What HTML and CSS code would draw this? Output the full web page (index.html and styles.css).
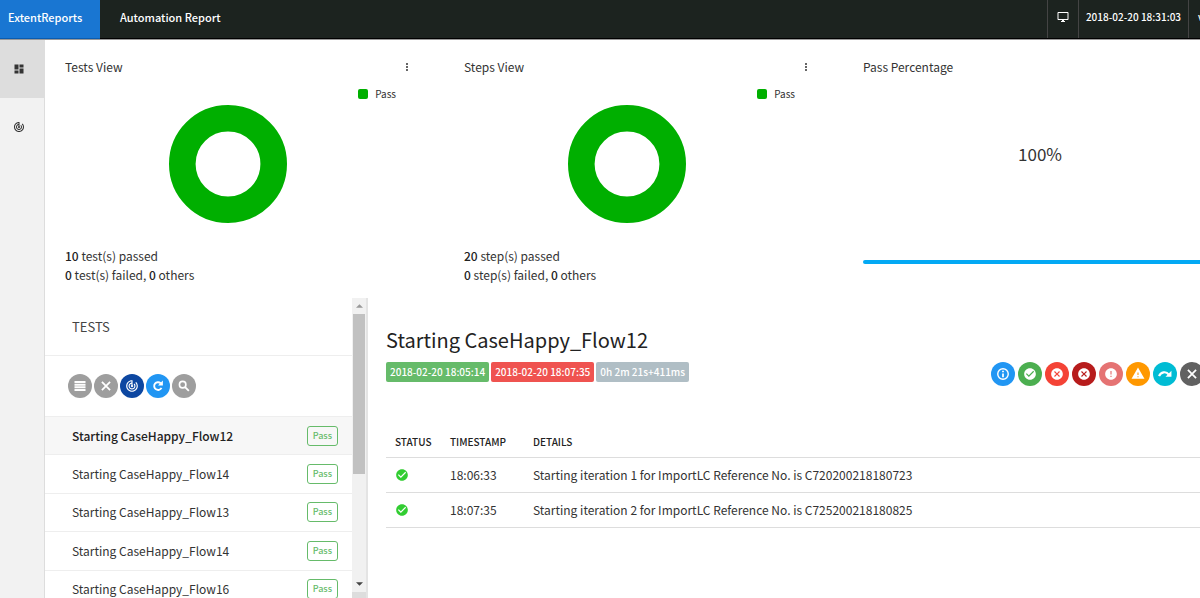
FILE: index.html
```html
<!DOCTYPE html>
<html lang="en">
<head>
<meta charset="utf-8">
<title>Automation Report</title>
<link rel="stylesheet" href="styles.css">
</head>
<body>
<svg class="sprite" aria-hidden="true">
  <symbol id="i-track" viewBox="0 0 24 24"><path fill="currentColor" d="M19.07 4.93l-1.41 1.41C19.1 7.79 20 9.79 20 12c0 4.42-3.58 8-8 8s-8-3.58-8-8c0-4.08 3.05-7.44 7-7.93v2.02C8.16 6.57 6 9.03 6 12c0 3.31 2.69 6 6 6s6-2.69 6-6c0-1.66-.67-3.16-1.76-4.24l-1.41 1.41C15.55 9.9 16 10.9 16 12c0 2.21-1.79 4-4 4s-4-1.79-4-4c0-1.86 1.28-3.41 3-3.86v2.14c-.6.35-1 .98-1 1.72 0 1.1.9 2 2 2s2-.9 2-2c0-.74-.4-1.38-1-1.72V2h-1C6.48 2 2 6.48 2 12s4.48 10 10 10 10-4.48 10-10c0-2.76-1.12-5.26-2.93-7.07z"/></symbol>
  <symbol id="i-close" viewBox="0 0 24 24"><path fill="none" stroke="currentColor" stroke-width="3" d="M5 5l14 14M19 5L5 19"/></symbol>
  <symbol id="i-more" viewBox="0 0 24 24"><path fill="currentColor" d="M12 8a2 2 0 100-4 2 2 0 000 4zm0 2a2 2 0 100 4 2 2 0 000-4zm0 6a2 2 0 100 4 2 2 0 000-4z"/></symbol>
  <symbol id="i-check" viewBox="0 0 24 24"><path fill="currentColor" d="M12 2C6.48 2 2 6.48 2 12s4.48 10 10 10 10-4.48 10-10S17.52 2 12 2zm-2 15l-5-5 1.41-1.41L10 14.17l7.59-7.59L19 8l-9 9z"/></symbol>
  <symbol id="i-cancel" viewBox="0 0 24 24"><path fill="currentColor" d="M12 2C6.47 2 2 6.47 2 12s4.47 10 10 10 10-4.47 10-10S17.53 2 12 2zm5 13.59L15.59 17 12 13.41 8.41 17 7 15.59 10.59 12 7 8.41 8.41 7 12 10.59 15.59 7 17 8.41 13.41 12 17 15.59z"/></symbol>
</svg>
<div class="page">
  <header class="topbar">
    <a class="brand" href="#">ExtentReports</a>
    <span class="report-name">Automation Report</span>
    <nav class="topnav">
      <a href="#" aria-label="Theme"><svg class="icon" viewBox="0 0 24 24"><path fill="currentColor" d="M21 2H3c-1.100 0-2 .9-2 2v12c0 1.100.9 2 2 2h7v2H8v2h8v-2h-2v-2h7c1.100 0 2-.9 2-2V4c0-1.100-.9-2-2-2zm0 14H3V4h18v12z"/></svg></a>
      <span class="stamp">2018-02-20 18:31:03</span>
      <span class="version">v</span>
    </nav>
  </header>
  <div class="body">
    <nav class="sidebar">
      <a class="active" href="#" aria-label="Dashboard"><svg class="icon" viewBox="0 0 24 24"><path fill="currentColor" d="M3 13h8V3H3v10zm0 8h8v-6H3v6zm10 0h8V11h-8v10zm0-18v6h8V3h-8z"/></svg></a>
      <a href="#" aria-label="Tests"><svg class="icon"><use href="#i-track"/></svg></a>
    </nav>
    <main class="main">
      <section class="charts">
        <article class="card">
          <div class="card-head"><h2>Tests View</h2><button class="more" aria-label="Tests view options"><svg class="icon"><use href="#i-more"/></svg></button></div>
          <div class="chart">
            <svg class="donut" viewBox="0 0 118 118"><circle cx="59" cy="59" r="45.700" fill="none" stroke="#00af00" stroke-width="26.600"/></svg>
            <span class="legend">Pass</span>
          </div>
          <p><b>10</b> test(s) passed</p>
          <p><b>0</b> test(s) failed, <b>0</b> others</p>
        </article>
        <article class="card">
          <div class="card-head"><h2>Steps View</h2><button class="more" aria-label="Steps view options"><svg class="icon"><use href="#i-more"/></svg></button></div>
          <div class="chart">
            <svg class="donut" viewBox="0 0 118 118"><circle cx="59" cy="59" r="45.700" fill="none" stroke="#00af00" stroke-width="26.600"/></svg>
            <span class="legend">Pass</span>
          </div>
          <p><b>20</b> step(s) passed</p>
          <p><b>0</b> step(s) failed, <b>0</b> others</p>
        </article>
        <article class="card">
          <div class="card-head"><h2>Pass Percentage</h2></div>
          <div class="percent">100%</div>
          <div class="progress"></div>
        </article>
      </section>
      <div class="panes">
        <section class="tests">
          <div class="tests-body">
            <h2>TESTS</h2>
            <div class="filters">
              <button class="dot grey" aria-label="Status"><svg class="icon" viewBox="-2 -2 28 28"><path fill="none" stroke="currentColor" stroke-width="4" d="M1 4h22M1 9.300h22M1 14.600h22M1 20h22"/></svg></button>
              <button class="dot grey" aria-label="Clear"><svg class="icon"><use href="#i-close"/></svg></button>
              <button class="dot navy" aria-label="Dashboard filter"><svg class="icon"><use href="#i-track"/></svg></button>
              <button class="dot blue" aria-label="Refresh"><svg class="icon" viewBox="-1 -1 26 26"><path fill="none" stroke="currentColor" stroke-width="3.500" d="M18.500 15.500A7.200 7.200 0 1 1 17 6.800"/><path fill="currentColor" d="M21 2v9h-9z"/></svg></button>
              <button class="dot grey" aria-label="Search"><svg class="icon" viewBox="-1 -1 26 26"><circle cx="9.500" cy="9.500" r="6" fill="none" stroke="currentColor" stroke-width="3"/><path stroke="currentColor" stroke-width="3.500" d="M14 14l7 7"/></svg></button>
            </div>
            <ul class="test-list">
              <li class="selected"><a href="#">Starting CaseHappy_Flow12</a><span class="tag">Pass</span></li>
              <li><a href="#">Starting CaseHappy_Flow14</a><span class="tag">Pass</span></li>
              <li><a href="#">Starting CaseHappy_Flow13</a><span class="tag">Pass</span></li>
              <li><a href="#">Starting CaseHappy_Flow14</a><span class="tag">Pass</span></li>
              <li><a href="#">Starting CaseHappy_Flow16</a><span class="tag">Pass</span></li>
            </ul>
          </div>
          <div class="scrollbar" aria-hidden="true">
            <svg class="arrow up" viewBox="0 0 8 4"><path fill="currentColor" d="M0 4l4-4 4 4z"/></svg>
            <div class="track"><div class="thumb"></div></div>
            <svg class="arrow" viewBox="0 0 8 4"><path fill="currentColor" d="M0 0l4 4 4-4z"/></svg>
            <div class="corner"></div>
          </div>
        </section>
        <section class="detail">
          <h1>Starting CaseHappy_Flow12</h1>
          <div class="meta">
            <div class="badges"><span class="badge green">2018-02-20 18:05:14</span><span class="badge red">2018-02-20 18:07:35</span><span class="badge slate">0h 2m 21s+411ms</span></div>
            <div class="statuses">
              <button class="dot blue" aria-label="Info"><svg class="icon" viewBox="0 0 24 24"><circle cx="12" cy="12" r="9" fill="none" stroke="currentColor" stroke-width="2.400"/><path fill="currentColor" d="M10.500 6.500h3v2.500h-3zM10.500 11h3v6.500h-3z"/></svg></button>
              <button class="dot pass" aria-label="Pass"><svg class="icon"><use href="#i-check"/></svg></button>
              <button class="dot fail" aria-label="Fail"><svg class="icon"><use href="#i-cancel"/></svg></button>
              <button class="dot fatal" aria-label="Fatal"><svg class="icon"><use href="#i-cancel"/></svg></button>
              <button class="dot error" aria-label="Error"><svg class="icon" viewBox="0 0 24 24"><path fill="currentColor" d="M12 2C6.480 2 2 6.480 2 12s4.480 10 10 10 10-4.480 10-10S17.520 2 12 2zm1 15h-2v-2h2v2zm0-4h-2V7h2v6z"/></svg></button>
              <button class="dot warn" aria-label="Warning"><svg class="icon" viewBox="-1 0 26 26"><path fill="currentColor" d="M0 22h24L12 1 0 22zm13-3h-2v-2h2v2zm0-4h-2v-5h2v5z"/></svg></button>
              <button class="dot skip" aria-label="Skip"><svg class="icon" viewBox="-1 -1 26 26"><path fill="none" stroke="currentColor" stroke-width="4" d="M1 16C4 8 14 6 19 13"/><path fill="currentColor" d="M24 6v11H13z"/></svg></button>
              <button class="dot dark" aria-label="Clear filters"><svg class="icon"><use href="#i-close"/></svg></button>
            </div>
          </div>
          <table>
            <thead><tr><th class="c-status">STATUS</th><th class="c-time">TIMESTAMP</th><th>DETAILS</th></tr></thead>
            <tbody>
              <tr><td><svg class="ok" role="img" aria-label="Pass"><use href="#i-check"/></svg></td><td>18:06:33</td><td>Starting iteration 1 for ImportLC Reference No. is C720200218180723</td></tr>
              <tr><td><svg class="ok" role="img" aria-label="Pass"><use href="#i-check"/></svg></td><td>18:07:35</td><td>Starting iteration 2 for ImportLC Reference No. is C725200218180825</td></tr>
            </tbody>
          </table>
        </section>
      </div>
    </main>
  </div>
</div>
</body>
</html>
```
FILE: styles.css
```css
* { box-sizing: border-box; }
html, body { height: 100%; margin: 0; overflow: hidden; }
body {
  font: 12px/20px "Noto Sans CJK SC", "Open Sans", sans-serif;
  color: #333;
  background: #fff;
}
h1, h2, p, ul { margin: 0; padding: 0; font-weight: 400; }
a { color: inherit; text-decoration: none; }
button { border: 0; padding: 0; background: none; color: inherit; }
b { font-weight: 500; color: #222; }
.sprite { display: none; }
.icon { display: block; width: 12px; height: 12px; }

/* The report runs slightly past the right edge of the window. */
.page { display: flex; flex-direction: column; width: calc(100% + 42px); height: 100%; }

.topbar {
  display: flex;
  flex: none;
  height: 40px;
  color: #fff;
  background: #1c231f;
  border-bottom: 1px solid #999;
  box-shadow: inset 0 -1px #000;
  font-size: 11px;
  line-height: 34px;
  font-weight: 500;
}
.brand { width: 100px; padding-left: 8px; background: #1976d2; box-shadow: inset 0 -1px #0a5cb0; }
.report-name { padding-left: 20px; }
.topnav { display: flex; margin-left: auto; font-size: 10px; }
.topnav > * { border-left: 1px solid #444; height: 38px; }
.topnav a { display: flex; width: 31px; padding-bottom: 5px; align-items: center; justify-content: center; }
.stamp { width: 110px; text-align: center; }
.version { width: 54px; padding-left: 9px; }

.body { display: flex; flex: 1; min-height: 0; }
.sidebar { flex: none; width: 45px; background: #f2f2f2; border-right: 1px solid #ddd; }
.sidebar a { display: flex; height: 58px; padding-right: 7px; align-items: center; justify-content: center; color: #333; }
.sidebar .active { background: #ddd; }
.main { display: flex; flex: 1; flex-direction: column; min-width: 0; }

.charts { display: grid; flex: none; grid-template-columns: repeat(3, 1fr); height: 258px; }
.card { padding: 17px 25px 0 20px; }
.card p { line-height: 19px; }
.card-head { display: flex; justify-content: space-between; }
h2 { font-size: 12px; line-height: 20px; }
.more { width: 24px; padding-left: 5px; }
.card:nth-child(-n+2) { padding-right: 24px; }
.chart { position: relative; display: flex; height: 169px; padding: 28px 29px 0 0; justify-content: center; }
.donut { width: 118px; height: 118px; }
.legend { position: absolute; top: 7px; right: 24px; display: flex; gap: 7px; align-items: center; font-size: 10px; }
.legend::before { content: ""; width: 10px; height: 10px; border-radius: 2px; background: #00af00; }
.percent { padding-top: 65px; font-size: 17px; line-height: 24px; text-align: center; }
.progress { height: 4px; margin-top: 94px; border-radius: 2px; background: #03a9f4; }

.panes { display: flex; flex: 1; min-height: 0; }
.tests { display: flex; flex: none; width: 323px; overflow: hidden; }
.tests-body { flex: 1; }
.tests h2 { padding: 19px 27px 18px; border-bottom: 1px solid #eee; color: #444; font-size: 13px; }
.filters { display: flex; gap: 2px; height: 61px; padding: 18px 22px 0 23px; border-bottom: 1px solid #eee; }
.dot { display: flex; flex: none; width: 24px; height: 24px; border-radius: 50%; align-items: center; justify-content: center; color: #fff; }
.dot .icon { width: 14px; height: 14px; }
.grey { background: #9e9e9e; }
.navy { background: #0d47a1; }
.blue { background: #2196f3; }
.pass { background: #4caf50; }
.fail { background: #f44336; }
.fatal { background: #b71c1c; }
.error { background: #e57373; }
.warn { background: #ff9800; }
.skip { background: #00bcd4; }
.dark { background: #616161; }

.test-list { display: grid; grid-auto-rows: 1fr; height: 192px; list-style: none; }
.test-list li { display: flex; padding: 0 14px 0 27px; align-items: center; justify-content: space-between; border-bottom: 1px solid #eee; }
.test-list .selected { background: #f7f7f7; color: #222; font-weight: 500; }
.tag { padding: 0 5px; border: 1px solid #66bb6a; border-radius: 3px; color: #66bb6a; font-size: 9px; font-weight: 500; line-height: 18px; }

.scrollbar { display: flex; flex: none; flex-direction: column; width: 16px; align-items: center; background: #f1f1f1; border-right: 2px solid #e4e4e4; }
.arrow { flex: none; width: 7px; height: 4px; margin: 6px 0; color: #444; }
.arrow.up { color: #999; }
.track { flex: 1; width: 12px; }
.thumb { height: 61%; background: #c1c1c1; }
.corner { width: 100%; height: 6px; background: #ddd; }

.detail { flex: 1; min-width: 0; padding: 27px 0 0 18px; }
h1 { font-size: 20px; line-height: 30px; color: #222; }
.meta { display: flex; padding: 7px 38px 0 0; justify-content: space-between; }
.badges { display: flex; gap: 2px; }
.badge { height: 20px; padding: 0 4px; border-radius: 2px; color: #fff; font-size: 10px; font-weight: 500; line-height: 20px; }
.green { background: #66bb6a; }
.red { background: #ef5350; }
.slate { background: #b0bec5; }
.statuses { display: flex; gap: 3px; }
table { width: 100%; margin-top: 40px; border-collapse: collapse; text-align: left; }
th, td { height: 35px; padding: 0 9px; border-bottom: 1px solid #ddd; }
th { height: 31px; padding-top: 2px; font-size: 10px; font-weight: 500; color: #222; }
.c-status { width: 55px; }
.c-time { width: 83px; }
.ok { display: block; width: 14px; height: 14px; color: #32cd32; }
```
